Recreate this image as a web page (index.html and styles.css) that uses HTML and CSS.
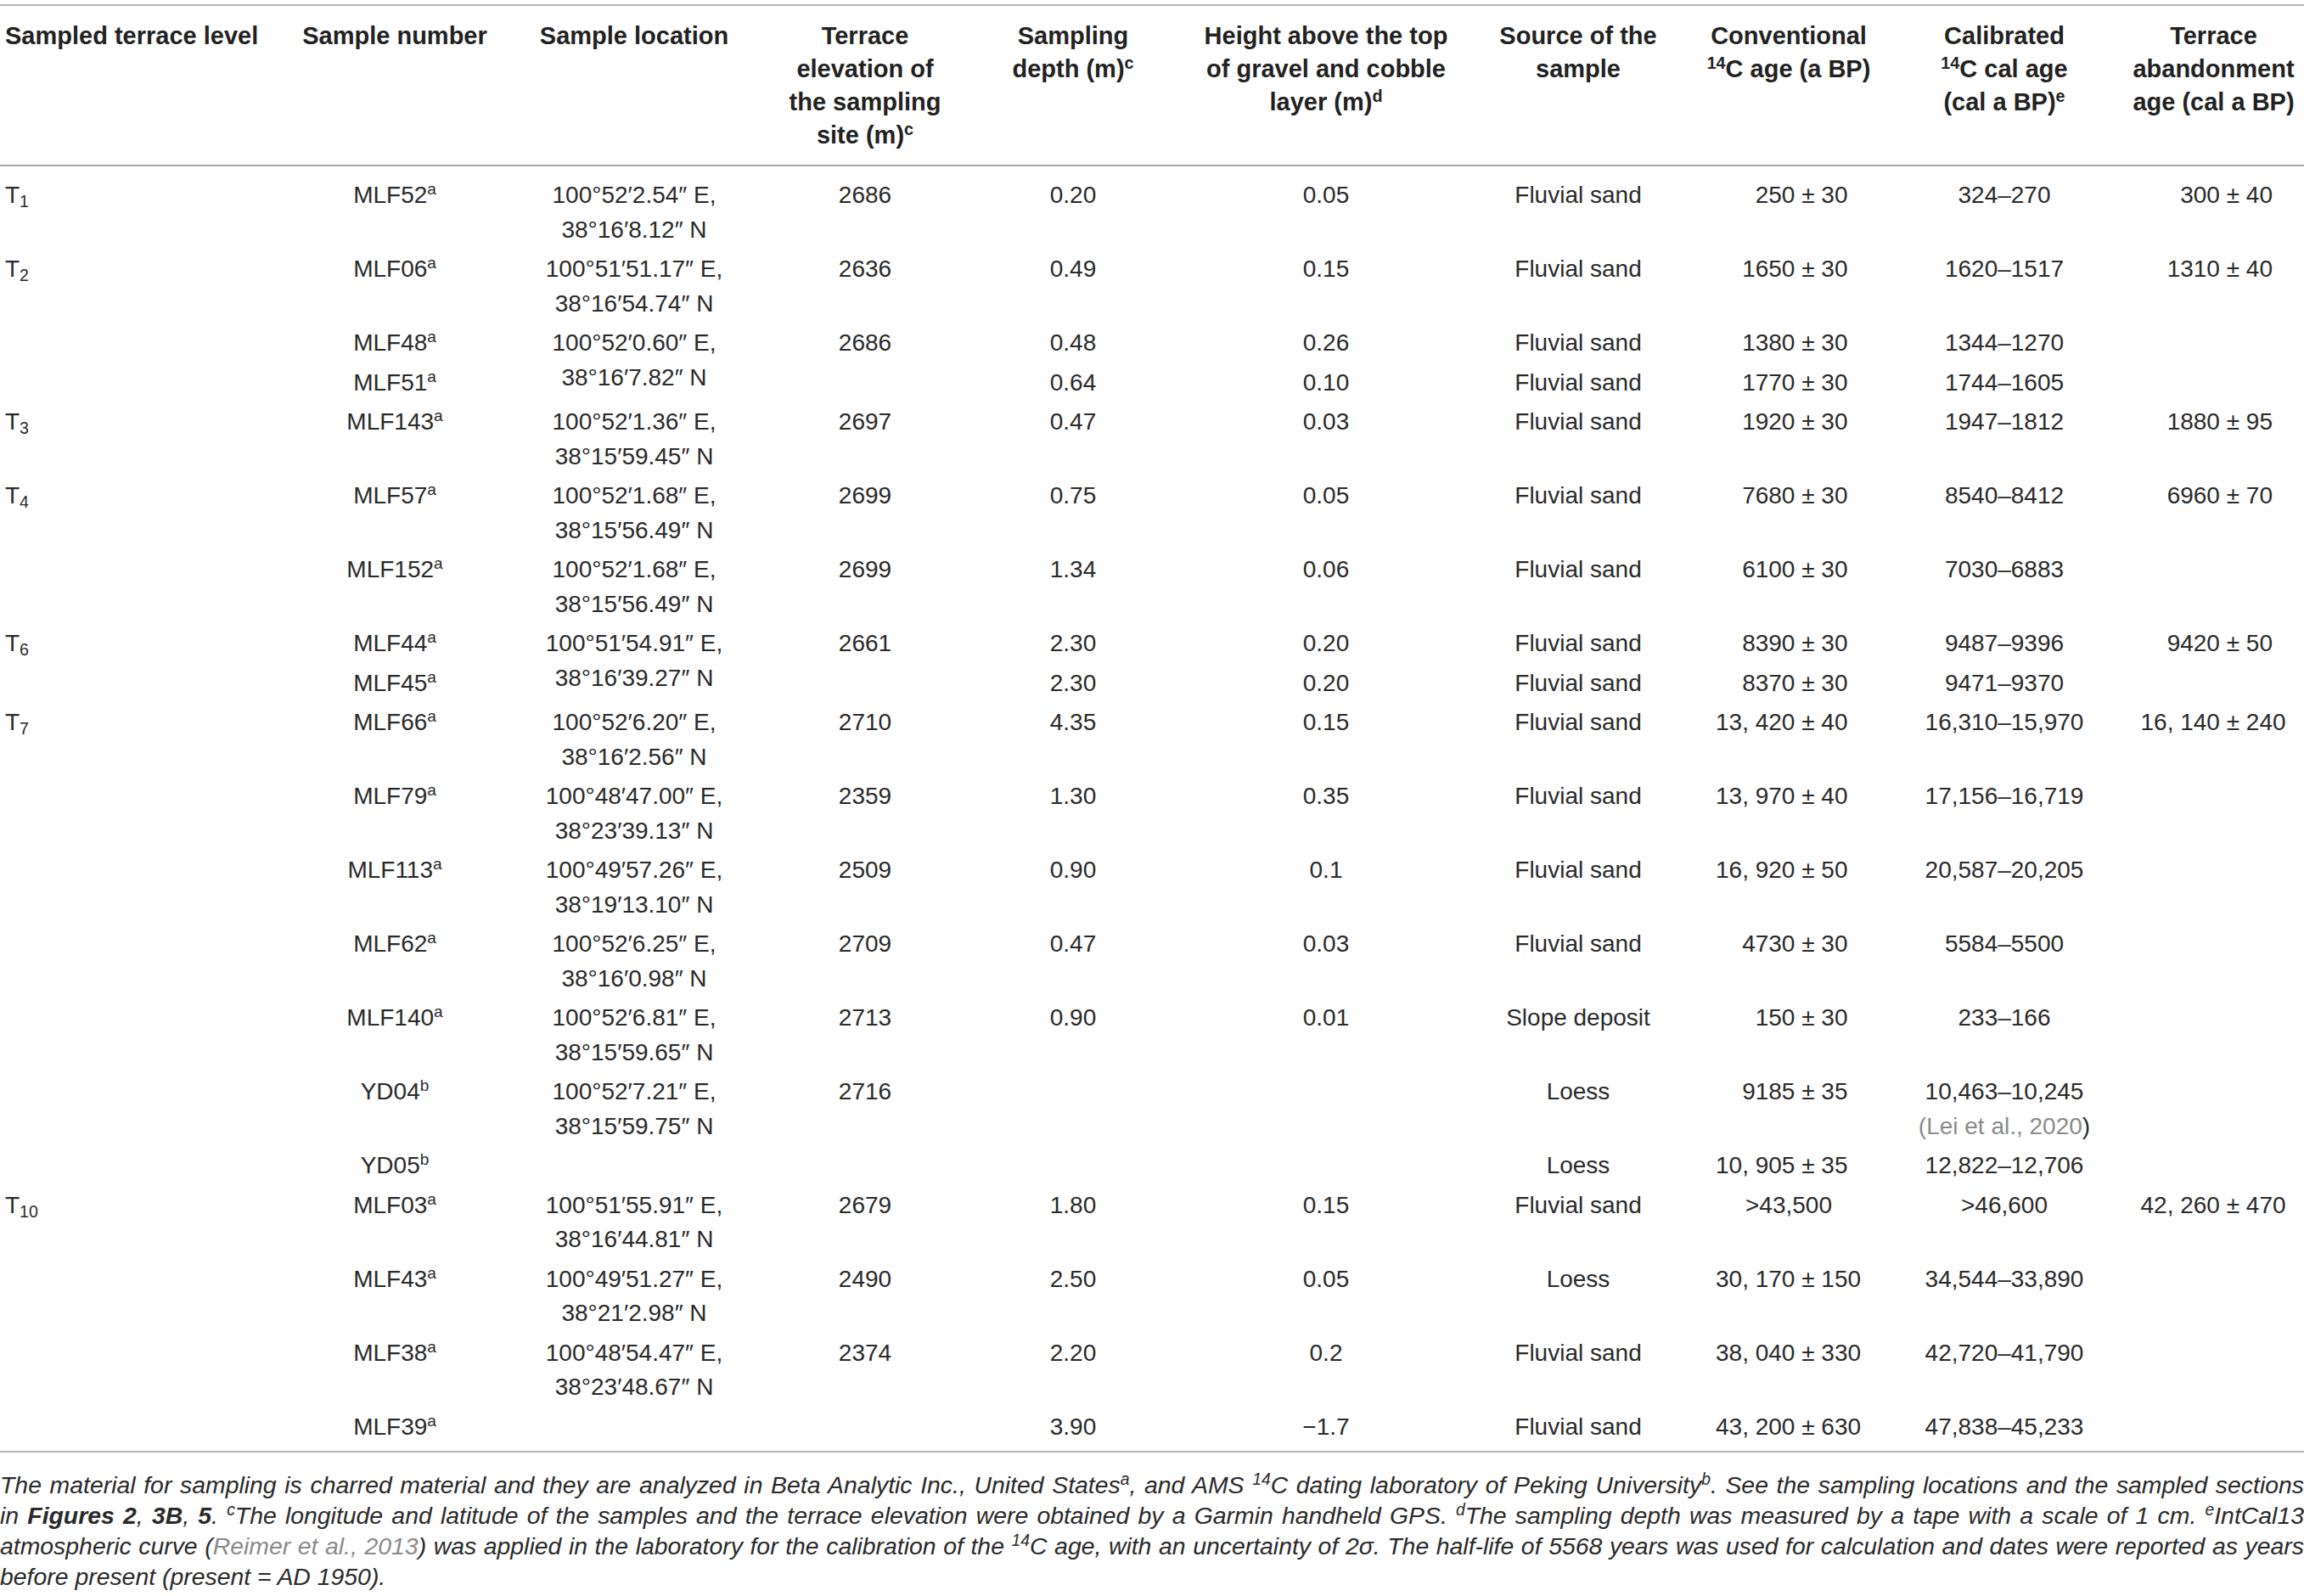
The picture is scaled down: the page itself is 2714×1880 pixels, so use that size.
FILE: index.html
```html
<!DOCTYPE html>
<html lang="en">
<head>
<meta charset="utf-8">
<title>Radiocarbon dating samples</title>
<link rel="stylesheet" href="styles.css">
</head>
<body>
<div class="page">
<table class="data">
<colgroup>
<col class="w1"><col class="w2"><col class="w3"><col class="w4"><col class="w5">
<col class="w6"><col class="w7"><col class="w8"><col class="w9"><col class="w10">
</colgroup>
<thead>
<tr>
<th class="left">Sampled terrace level</th>
<th>Sample number</th>
<th>Sample location</th>
<th>Terrace<br>elevation of<br>the sampling<br>site (m)<sup>c</sup></th>
<th>Sampling<br>depth (m)<sup>c</sup></th>
<th>Height above the top<br>of gravel and cobble<br>layer (m)<sup>d</sup></th>
<th>Source of the<br>sample</th>
<th>Conventional<br><sup>14</sup>C age (a BP)</th>
<th>Calibrated<br><sup>14</sup>C cal age<br>(cal a BP)<sup>e</sup></th>
<th>Terrace<br>abandonment<br>age (cal a BP)</th>
</tr>
</thead>
<tbody>
<tr class="first">
<td class="left">T<sub>1</sub></td><td>MLF52<sup>a</sup></td><td>100°52′2.54″ E,<br>38°16′8.12″ N</td><td>2686</td><td>0.20</td><td>0.05</td><td>Fluvial sand</td>
<td><span class="l">250</span><span class="r">&nbsp;± 30</span></td><td>324–270</td><td><span class="l">300</span><span class="r">&nbsp;± 40</span></td>
</tr>
<tr>
<td class="left">T<sub>2</sub></td><td>MLF06<sup>a</sup></td><td>100°51′51.17″ E,<br>38°16′54.74″ N</td><td>2636</td><td>0.49</td><td>0.15</td><td>Fluvial sand</td>
<td><span class="l">1650</span><span class="r">&nbsp;± 30</span></td><td>1620–1517</td><td><span class="l">1310</span><span class="r">&nbsp;± 40</span></td>
</tr>
<tr>
<td class="left"></td><td>MLF48<sup>a</sup></td><td rowspan="2">100°52′0.60″ E,<br>38°16′7.82″ N</td><td>2686</td><td>0.48</td><td>0.26</td><td>Fluvial sand</td>
<td><span class="l">1380</span><span class="r">&nbsp;± 30</span></td><td>1344–1270</td><td></td>
</tr>
<tr>
<td class="left"></td><td>MLF51<sup>a</sup></td><td></td><td>0.64</td><td>0.10</td><td>Fluvial sand</td>
<td><span class="l">1770</span><span class="r">&nbsp;± 30</span></td><td>1744–1605</td><td></td>
</tr>
<tr>
<td class="left">T<sub>3</sub></td><td>MLF143<sup>a</sup></td><td>100°52′1.36″ E,<br>38°15′59.45″ N</td><td>2697</td><td>0.47</td><td>0.03</td><td>Fluvial sand</td>
<td><span class="l">1920</span><span class="r">&nbsp;± 30</span></td><td>1947–1812</td><td><span class="l">1880</span><span class="r">&nbsp;± 95</span></td>
</tr>
<tr>
<td class="left">T<sub>4</sub></td><td>MLF57<sup>a</sup></td><td>100°52′1.68″ E,<br>38°15′56.49″ N</td><td>2699</td><td>0.75</td><td>0.05</td><td>Fluvial sand</td>
<td><span class="l">7680</span><span class="r">&nbsp;± 30</span></td><td>8540–8412</td><td><span class="l">6960</span><span class="r">&nbsp;± 70</span></td>
</tr>
<tr>
<td class="left"></td><td>MLF152<sup>a</sup></td><td>100°52′1.68″ E,<br>38°15′56.49″ N</td><td>2699</td><td>1.34</td><td>0.06</td><td>Fluvial sand</td>
<td><span class="l">6100</span><span class="r">&nbsp;± 30</span></td><td>7030–6883</td><td></td>
</tr>
<tr>
<td class="left">T<sub>6</sub></td><td>MLF44<sup>a</sup></td><td rowspan="2">100°51′54.91″ E,<br>38°16′39.27″ N</td><td>2661</td><td>2.30</td><td>0.20</td><td>Fluvial sand</td>
<td><span class="l">8390</span><span class="r">&nbsp;± 30</span></td><td>9487–9396</td><td><span class="l">9420</span><span class="r">&nbsp;± 50</span></td>
</tr>
<tr>
<td class="left"></td><td>MLF45<sup>a</sup></td><td></td><td>2.30</td><td>0.20</td><td>Fluvial sand</td>
<td><span class="l">8370</span><span class="r">&nbsp;± 30</span></td><td>9471–9370</td><td></td>
</tr>
<tr>
<td class="left">T<sub>7</sub></td><td>MLF66<sup>a</sup></td><td>100°52′6.20″ E,<br>38°16′2.56″ N</td><td>2710</td><td>4.35</td><td>0.15</td><td>Fluvial sand</td>
<td><span class="l">13, 420</span><span class="r">&nbsp;± 40</span></td><td>16,310–15,970</td><td><span class="l">16, 140</span><span class="r">&nbsp;± 240</span></td>
</tr>
<tr>
<td class="left"></td><td>MLF79<sup>a</sup></td><td>100°48′47.00″ E,<br>38°23′39.13″ N</td><td>2359</td><td>1.30</td><td>0.35</td><td>Fluvial sand</td>
<td><span class="l">13, 970</span><span class="r">&nbsp;± 40</span></td><td>17,156–16,719</td><td></td>
</tr>
<tr>
<td class="left"></td><td>MLF113<sup>a</sup></td><td>100°49′57.26″ E,<br>38°19′13.10″ N</td><td>2509</td><td>0.90</td><td>0.1</td><td>Fluvial sand</td>
<td><span class="l">16, 920</span><span class="r">&nbsp;± 50</span></td><td>20,587–20,205</td><td></td>
</tr>
<tr>
<td class="left"></td><td>MLF62<sup>a</sup></td><td>100°52′6.25″ E,<br>38°16′0.98″ N</td><td>2709</td><td>0.47</td><td>0.03</td><td>Fluvial sand</td>
<td><span class="l">4730</span><span class="r">&nbsp;± 30</span></td><td>5584–5500</td><td></td>
</tr>
<tr>
<td class="left"></td><td>MLF140<sup>a</sup></td><td>100°52′6.81″ E,<br>38°15′59.65″ N</td><td>2713</td><td>0.90</td><td>0.01</td><td>Slope deposit</td>
<td><span class="l">150</span><span class="r">&nbsp;± 30</span></td><td>233–166</td><td></td>
</tr>
<tr>
<td class="left"></td><td>YD04<sup>b</sup></td><td>100°52′7.21″ E,<br>38°15′59.75″ N</td><td>2716</td><td></td><td></td><td>Loess</td>
<td><span class="l">9185</span><span class="r">&nbsp;± 35</span></td><td>10,463–10,245<br><span class="cite">(Lei et al., 2020</span>)</td><td></td>
</tr>
<tr>
<td class="left"></td><td>YD05<sup>b</sup></td><td></td><td></td><td></td><td></td><td>Loess</td>
<td><span class="l">10, 905</span><span class="r">&nbsp;± 35</span></td><td>12,822–12,706</td><td></td>
</tr>
<tr>
<td class="left">T<sub>10</sub></td><td>MLF03<sup>a</sup></td><td>100°51′55.91″ E,<br>38°16′44.81″ N</td><td>2679</td><td>1.80</td><td>0.15</td><td>Fluvial sand</td>
<td>&gt;43,500</td><td>&gt;46,600</td><td><span class="l">42, 260</span><span class="r">&nbsp;± 470</span></td>
</tr>
<tr>
<td class="left"></td><td>MLF43<sup>a</sup></td><td>100°49′51.27″ E,<br>38°21′2.98″ N</td><td>2490</td><td>2.50</td><td>0.05</td><td>Loess</td>
<td><span class="l">30, 170</span><span class="r">&nbsp;± 150</span></td><td>34,544–33,890</td><td></td>
</tr>
<tr>
<td class="left"></td><td>MLF38<sup>a</sup></td><td>100°48′54.47″ E,<br>38°23′48.67″ N</td><td>2374</td><td>2.20</td><td>0.2</td><td>Fluvial sand</td>
<td><span class="l">38, 040</span><span class="r">&nbsp;± 330</span></td><td>42,720–41,790</td><td></td>
</tr>
<tr class="last">
<td class="left"></td><td>MLF39<sup>a</sup></td><td></td><td></td><td>3.90</td><td>−1.7</td><td>Fluvial sand</td>
<td><span class="l">43, 200</span><span class="r">&nbsp;± 630</span></td><td>47,838–45,233</td><td></td>
</tr>
</tbody>
</table>
<p class="note">
<span class="line">The material for sampling is charred material and they are analyzed in Beta Analytic Inc., United States<sup>a</sup>, and AMS <sup>14</sup>C dating laboratory of Peking University<sup>b</sup>. See the sampling locations and the sampled sections</span>
<span class="line">in <b>Figures 2</b>, <b>3B</b>, <b>5</b>. <sup>c</sup>The longitude and latitude of the samples and the terrace elevation were obtained by a Garmin handheld GPS. <sup>d</sup>The sampling depth was measured by a tape with a scale of 1 cm. <sup>e</sup>IntCal13</span>
<span class="line">atmospheric curve (<span class="cite">Reimer et al., 2013</span>) was applied in the laboratory for the calibration of the <sup>14</sup>C age, with an uncertainty of 2σ. The half-life of 5568 years was used for calculation and dates were reported as years</span>
<span class="line end">before present (present = AD 1950).</span>
</p>
</div>
</body>
</html>
```

FILE: styles.css
```css
html, body {
  margin: 0;
  padding: 0;
  background: #ffffff;
}

.page {
  width: 2714px;
  padding-top: 5px;
  font-family: "Liberation Sans", Arial, Helvetica, sans-serif;
  color: #262626;
}

.data {
  width: 2714px;
  table-layout: fixed;
  border-collapse: collapse;
  border-top: 2px solid #b4b4b4;
  border-bottom: 2px solid #b4b4b4;
}

.w1 { width: 345px; }
.w2 { width: 240px; }
.w3 { width: 324px; }
.w4 { width: 220px; }
.w5 { width: 270px; }
.w6 { width: 326px; }
.w7 { width: 268px; }
.w8 { width: 228px; }
.w9 { width: 280px; }
.w10 { width: 213px; }

.data th {
  font-size: 29px;
  font-weight: bold;
  line-height: 39.3px;
  color: #222222;
  text-align: center;
  vertical-align: top;
  padding: 15.6px 6px 14px;
  border-bottom: 2px solid #a8a8a8;
  white-space: nowrap;
}

.data td {
  font-size: 28px;
  line-height: 40.5px;
  text-align: center;
  vertical-align: top;
  padding: 3px 6px;
  white-space: nowrap;
  color: #2a2a2a;
}

.data th.left,
.data td.left {
  text-align: left;
}

.data tr.first td {
  padding-top: 14.5px;
}

.data tr.last td {
  padding-bottom: 8px;
}

.l {
  display: inline-block;
  width: 3.34em;
  text-align: right;
}

.r {
  display: inline-block;
  width: 2.81em;
  text-align: left;
}

sup {
  font-size: 0.68em;
  line-height: 0;
  vertical-align: 0.5em;
}

sub {
  font-size: 0.7em;
  line-height: 0;
  vertical-align: -0.28em;
}

.cite {
  color: #8a8a8a;
}

.note {
  margin: 20px 0 0;
  font-size: 28.4px;
  line-height: 36px;
  font-style: italic;
  color: #2a2a2a;
}

.note .line {
  display: block;
  white-space: nowrap;
  text-align: justify;
  text-align-last: justify;
}

.note .line.end {
  text-align-last: left;
}

.note b {
  font-weight: bold;
}
```
